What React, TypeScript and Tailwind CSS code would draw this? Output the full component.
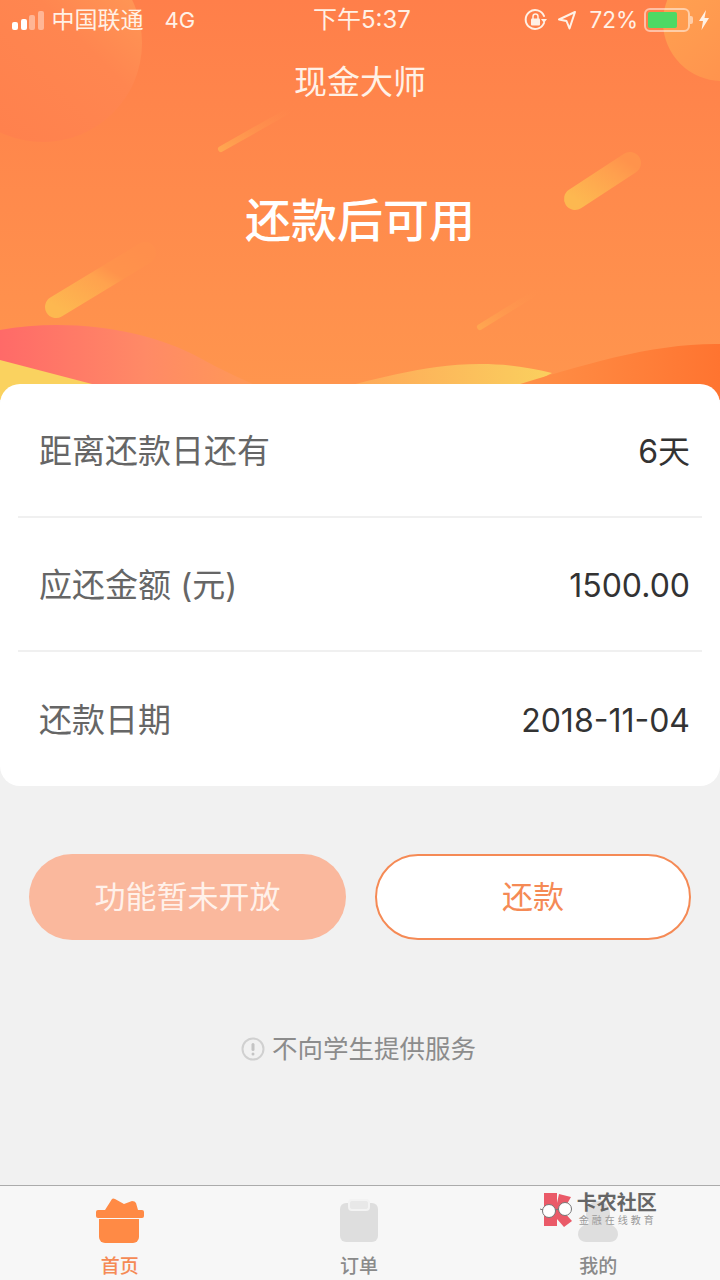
import React from 'react';

const font = "font-['Inter','Noto_Sans_CJK_SC',sans-serif]";

const HeaderArt: React.FC = () => (
  <svg className="absolute inset-0" width="720" height="400" viewBox="0 0 720 400">
    <defs>
      <linearGradient id="bg" x1="0" y1="0" x2="0" y2="1">
        <stop offset="0" stopColor="#ff7f4a" />
        <stop offset="1" stopColor="#ff964e" />
      </linearGradient>
      <linearGradient id="circleL" x1="0" y1="1" x2="1" y2="0">
        <stop offset="0" stopColor="#ff7f4c" />
        <stop offset="0.6" stopColor="#ff8650" />
        <stop offset="1" stopColor="#ff9f58" />
      </linearGradient>
      <linearGradient id="circleR" x1="0" y1="0" x2="1" y2="1">
        <stop offset="0" stopColor="#ffa452" />
        <stop offset="1" stopColor="#ff8e4c" />
      </linearGradient>
      <linearGradient id="streakRight" x1="0" y1="1" x2="1" y2="0">
        <stop offset="0" stopColor="#fdb850" />
        <stop offset="0.7" stopColor="#ffa04e" />
        <stop offset="1" stopColor="#ff934c" />
      </linearGradient>
      <linearGradient id="streakLeft" x1="0" y1="1" x2="1" y2="0">
        <stop offset="0" stopColor="#fdb850" />
        <stop offset="0.5" stopColor="#ffa24e" />
        <stop offset="0.65" stopColor="#ff934c" />
        <stop offset="1" stopColor="#ff8f4c" />
      </linearGradient>
      <linearGradient id="streakThin" x1="0" y1="1" x2="1" y2="0">
        <stop offset="0" stopColor="#ffa650" />
        <stop offset="1" stopColor="#ff914e" stopOpacity="0" />
      </linearGradient>
      <linearGradient id="wavePink" x1="0" y1="0" x2="1" y2="0">
        <stop offset="0" stopColor="#ff6a68" />
        <stop offset="0.55" stopColor="#ff8a66" />
        <stop offset="1" stopColor="#ff9a55" />
      </linearGradient>
      <linearGradient id="waveYellow" x1="0" y1="0" x2="1" y2="0">
        <stop offset="0" stopColor="#ffa258" />
        <stop offset="1" stopColor="#fad05e" />
      </linearGradient>
      <linearGradient id="waveOrange" x1="0" y1="0" x2="1" y2="0">
        <stop offset="0" stopColor="#ff934a" />
        <stop offset="1" stopColor="#ff7430" />
      </linearGradient>
    </defs>
    <rect width="720" height="400" fill="url(#bg)" />
    <circle cx="43" cy="43" r="99" fill="url(#circleL)" />
    <circle cx="722" cy="22" r="59" fill="url(#circleR)" />
    <line x1="221" y1="149" x2="290" y2="110" stroke="url(#streakThin)" strokeWidth="6" strokeLinecap="round" />
    <line x1="575" y1="199" x2="630" y2="163" stroke="url(#streakRight)" strokeWidth="22" strokeLinecap="round" />
    <line x1="56" y1="307" x2="145" y2="253" stroke="url(#streakLeft)" strokeWidth="22" strokeLinecap="round" />
    <line x1="480" y1="327" x2="540" y2="290" stroke="url(#streakThin)" strokeWidth="6" strokeLinecap="round" />
    <path d="M0 330C70 317 150 330 200 358C225 372 245 380 265 390V400H0Z" fill="url(#wavePink)" />
    <path d="M0 360L92 384V400H0Z" fill="#fad25f" />
    <path d="M320 392C370 382 420 364 480 364C510 364 530 368 552 373L500 400H320Z" fill="url(#waveYellow)" />
    <path d="M500 390C580 366 650 343 720 344V400H500Z" fill="url(#waveOrange)" />
  </svg>
);

const StatusBar: React.FC = () => (
  <div className="relative flex h-[40px] items-center justify-between pl-3 pr-[10px] text-[23px] text-[#fff1e6]">
    <div className="flex flex-1 items-center">
      <div className="mr-[8px] flex items-end gap-[2.500px]">
        <span className="h-[8px] w-[6px] rounded-[2px] bg-white" />
        <span className="h-[11px] w-[6px] rounded-[2px] bg-white" />
        <span className="h-[15px] w-[6px] rounded-[2px] bg-white/40" />
        <span className="h-[19px] w-[6px] rounded-[2px] bg-white/40" />
      </div>
      <span>中国联通</span>
      <span className="ml-[21px] text-[22px]">4G</span>
    </div>
    <span className="absolute left-[313px] text-[24px]">下午5:37</span>
    <div className="flex items-center">
      <svg width="24" height="24" viewBox="0 0 24 24" fill="none" stroke="#fff1e6" strokeWidth="2">
        <path d="M20 15A9.500 9.500 0 1 1 20 8" strokeLinecap="round" />
        <path d="M17 11h6l-3 4z" fill="#fff1e6" stroke="none" />
        <rect x="7" y="10.500" width="9" height="7" rx="1" fill="#fff1e6" stroke="none" />
        <path d="M9 11V8.500a2.500 2.500 0 0 1 5 0V11" strokeWidth="1.500" />
      </svg>
      <svg className="ml-[9px]" width="20" height="20" viewBox="0 0 20 20" fill="none" stroke="#fff1e6" strokeWidth="2" strokeLinejoin="round">
        <path d="M18 2L2 9.500l7.500 1.500 3 7.500z" />
      </svg>
      <span className="ml-[12px] text-[22.500px]">72%</span>
      <div className="ml-[6px] flex h-[24px] w-[46px] items-center rounded-[6px] border-2 border-white/50 p-[2px]">
        <div className="h-full w-[29px] rounded-[2px] bg-[#4cd964]" />
      </div>
      <span className="h-[8px] w-[3px] rounded-r-[2px] bg-white/50" />
      <svg className="ml-[5px]" width="12" height="20" viewBox="0 0 12 20" fill="#fff1e6">
        <path d="M8 0L1 11h4l-1.500 9L11 8H6.500z" />
      </svg>
    </div>
  </div>
);

const Row: React.FC<{ label: string; value: string; last?: boolean }> = ({ label, value, last }) => (
  <div className={`flex h-[134px] items-center justify-between pl-[21px] pr-[12px] pt-[3px] ${last ? '' : 'border-b-2 border-[#f0f0f0]'}`}>
    <span className="text-[33px] text-[#666666]">{label}</span>
    <span className="text-[32px] text-[#333333]">{value}</span>
  </div>
);

const App: React.FC = () => {
  return (
    <div className={`relative flex h-[1280px] w-[720px] flex-col overflow-hidden bg-[#f1f1f1] ${font}`}>
      <div className="relative h-[400px] shrink-0">
        <HeaderArt />
        <StatusBar />
        <div className="relative mt-[19px] text-center text-[33px] leading-[46px] text-[#fff1e6]">现金大师</div>
        <div className="relative mt-[82px] text-center text-[46px] font-medium leading-[66px] text-white">还款后可用</div>
      </div>

      <div className="relative -mt-[16px] rounded-[20px] bg-white px-[18px]">
        <Row label="距离还款日还有" value="6天" />
        <Row label="应还金额 (元)" value="1500.00" />
        <Row label="还款日期" value="2018-11-04" last />
      </div>

      <div className="mt-[68px] flex gap-[29px] pl-[29px] pr-[29px]">
        <button className="h-[86px] w-[317px] rounded-full bg-[#fab89d] text-[31px] text-[#fff1ea]">功能暂未开放</button>
        <button className="h-[86px] w-[316px] rounded-full border-2 border-[#f58a55] bg-white text-[31px] text-[#f58a55]">还款</button>
      </div>

      <div className="mt-[87px] flex items-center justify-center gap-[7px] pr-[3px] text-[25.500px] leading-[44px] text-[#8c8c8c]">
        <svg width="24" height="24" viewBox="0 0 24 24" fill="none">
          <circle cx="12" cy="12" r="10.500" stroke="#d0d0d0" strokeWidth="2" />
          <rect x="10.500" y="6" width="3" height="8" rx="1.500" fill="#c4c4c4" />
          <circle cx="12" cy="17" r="1.500" fill="#c4c4c4" />
        </svg>
        <span>不向学生提供服务</span>
      </div>

      <div className="mt-auto flex h-[95px] border-t border-[#ababab] bg-[#f7f7f7] pr-[2px]">
        <div className="flex flex-1 flex-col items-center pt-[12px]">
          <svg width="48" height="48" viewBox="0 0 48 48" fill="#ff8a45">
            <path d="M9 12L16 1Q17 0 19 1L28 6L36 3Q39 3 40 5L42 12Z" />
            <rect x="0" y="12" width="48" height="8" rx="2" />
            <path d="M3 21h40v18a6 6 0 0 1-6 6H9a6 6 0 0 1-6-6z" />
          </svg>
          <span className="mt-[8px] text-[19px] font-medium leading-[26px] text-[#f58a55]">首页</span>
        </div>
        <div className="flex flex-1 flex-col items-center pt-[12px]">
          <svg width="40" height="48" viewBox="0 0 40 48">
            <rect x="1" y="5" width="38" height="39" rx="6" fill="#dedede" />
            <rect x="10" y="2" width="20" height="10" rx="3" fill="#e8e8e8" stroke="#f3f3f3" strokeWidth="2" />
          </svg>
          <span className="mt-[8px] text-[19px] font-medium leading-[26px] text-[#8a8a8a]">订单</span>
        </div>
        <div className="relative flex flex-1 flex-col items-center pt-[12px]">
          <svg width="48" height="48" viewBox="0 0 48 48" fill="#dedede">
            <ellipse cx="24" cy="16" rx="12" ry="13" />
            <path d="M4 36c0-8 10-12 20-12s20 4 20 12c0 5-4 8-8 8H12c-4 0-8-3-8-8z" />
          </svg>
          <span className="mt-[8px] text-[19px] font-medium leading-[26px] text-[#8a8a8a]">我的</span>

          <div className="absolute left-[60px] top-[6px] flex items-center">
            <svg width="38" height="36" viewBox="0 0 38 36">
              <path d="M5 1h13v10L20 2l12 3-8 14 9 10-8 6-7-8v7H5z" fill="#ea5a68" />
              <circle cx="10" cy="19" r="6.500" fill="#fff" stroke="#777" strokeWidth="1" />
              <circle cx="26" cy="17" r="6.500" fill="#fff" stroke="#777" strokeWidth="1" />
              <path d="M1 17l3 1M16 18l4-1" stroke="#777" strokeWidth="1" fill="none" />
            </svg>
            <div className="flex flex-col">
              <span className="text-[20px] font-bold leading-[21px] text-[#666666]">卡农社区</span>
              <span className="ml-[2px] text-[10px] leading-[13px] tracking-[3px] text-[#9a9a9a]">金融在线教育</span>
            </div>
          </div>
        </div>
      </div>
    </div>
  );
};

export default App;
